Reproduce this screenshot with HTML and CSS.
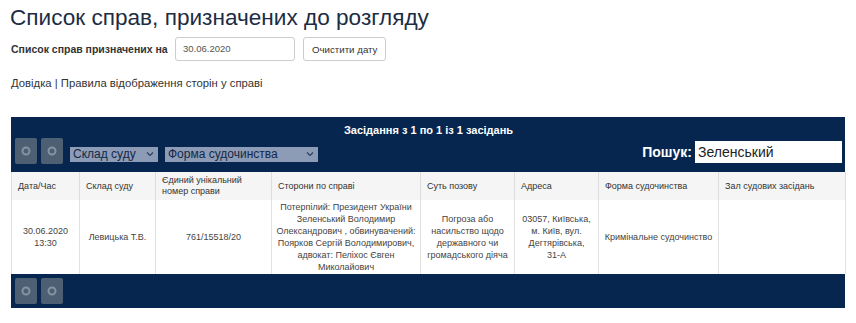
FILE: index.html
```html
<!DOCTYPE html>
<html lang="uk">
<head>
  <meta charset="UTF-8">
  <title>Список справ, призначених до розгляду</title>
  <link rel="stylesheet" href="styles.css">
</head>
<body>
  <h1 class="title">Список справ, призначених до розгляду</h1>

  <!-- Вибір дати -->
  <div class="date-row">
    <span class="date-label">Список справ призначених на</span>
    <div class="date-input">30.06.2020</div>
    <button class="btn-clear">Очистити дату</button>
  </div>

  <p class="links">Довідка | Правила відображення сторін у справі</p>

  <!-- Таблиця засідань -->
  <div class="panel">
    <div class="panel-head">
      <div class="panel-title">Засідання з 1 по 1 із 1 засідань</div>
      <div class="toolbar">
        <span class="tool-btn"><svg width="10" height="10" viewBox="0 0 10 10"><circle cx="5" cy="5" r="3.5" fill="none" stroke="#8393a3" stroke-width="2"/></svg></span>
        <span class="tool-btn"><svg width="10" height="10" viewBox="0 0 10 10"><circle cx="5" cy="5" r="3.5" fill="none" stroke="#8393a3" stroke-width="2"/></svg></span>
        <span class="fake-select sel-court">Склад суду <svg width="8" height="6" viewBox="0 0 8 6"><path d="M1 1.5 L4 4.5 L7 1.5" fill="none" stroke="#2b3f5e" stroke-width="1.2"/></svg></span>
        <span class="fake-select sel-form">Форма судочинства <svg width="8" height="6" viewBox="0 0 8 6"><path d="M1 1.5 L4 4.5 L7 1.5" fill="none" stroke="#2b3f5e" stroke-width="1.2"/></svg></span>
        <div class="search">
          <span class="search-label">Пошук:</span>
          <div class="search-input">Зеленський</div>
        </div>
      </div>
    </div>

    <table class="cases">
      <colgroup>
        <col style="width:68px">
        <col style="width:76px">
        <col style="width:116px">
        <col style="width:149px">
        <col style="width:94px">
        <col style="width:84px">
        <col style="width:120px">
        <col style="width:127px">
      </colgroup>
      <thead>
        <tr>
          <th>Дата/Час</th>
          <th>Склад суду</th>
          <th>Єдиний унікальний номер справи</th>
          <th>Сторони по справі</th>
          <th>Суть позову</th>
          <th>Адреса</th>
          <th>Форма судочинства</th>
          <th>Зал судових засідань</th>
        </tr>
      </thead>
      <tbody>
        <tr>
          <td>30.06.2020<br>13:30</td>
          <td>Левицька Т.В.</td>
          <td>761/15518/20</td>
          <td>Потерпілий: Президент України Зеленський Володимир Олександрович , обвинувачений: Поярков Сергій Володимирович, адвокат: Пеліхос Євген Миколайович</td>
          <td>Погроза або насильство щодо державного чи громадського діяча</td>
          <td>03057, Київська, м. Київ, вул. Дегтярівська, <span class="nowrap">31-А</span></td>
          <td>Кримінальне судочинство</td>
          <td></td>
        </tr>
      </tbody>
    </table>

    <div class="panel-foot">
      <span class="tool-btn"><svg width="10" height="10" viewBox="0 0 10 10"><circle cx="5" cy="5" r="3.5" fill="none" stroke="#8393a3" stroke-width="2"/></svg></span>
      <span class="tool-btn"><svg width="10" height="10" viewBox="0 0 10 10"><circle cx="5" cy="5" r="3.5" fill="none" stroke="#8393a3" stroke-width="2"/></svg></span>
    </div>
  </div>
</body>
</html>
```

FILE: styles.css
```css
body {
  margin: 0;
  padding: 0 11px;
  font-family: "Liberation Sans", Arial, sans-serif;
  color: #333;
  background: #fff;
}

.title {
  margin: 0;
  padding-top: 3px;
  margin-left: -1px;
  font-size: 22.6px;
  font-weight: normal;
  color: #1d2d44;
  line-height: 30px;
}

.date-row {
  display: flex;
  align-items: center;
  margin-top: 4px;
  height: 24px;
}

.date-label {
  flex: none;
  width: 164px;
  white-space: nowrap;
  font-size: 10.5px;
  font-weight: bold;
  color: #333;
}

.date-input {
  width: 101px;
  height: 22px;
  line-height: 22px;
  padding: 0 10px 0 7px;
  border: 1px solid #ccc;
  border-radius: 3px;
  font-size: 9.5px;
  color: #555;
}

.btn-clear {
  margin-left: 8px;
  height: 24px;
  padding: 0 8px;
  border: 1px solid #ccc;
  border-radius: 3px;
  background: #fff;
  font-family: "Liberation Sans", Arial, sans-serif;
  font-size: 9.7px;
  color: #333;
}

.links {
  margin: 14px 0 0;
  font-size: 11.3px;
  line-height: 16px;
  color: #333;
}

.panel {
  margin-top: 26px;
  width: 834px;
}

.panel-head {
  background: #07264f;
  padding: 7px 3px 8px 4px;
}

.panel-title {
  text-align: center;
  color: #fff;
  font-weight: bold;
  font-size: 11px;
  line-height: 13px;
}

.toolbar {
  display: flex;
  align-items: center;
  height: 27px;
}

.tool-btn {
  display: inline-flex;
  align-items: center;
  justify-content: center;
  width: 22px;
  height: 26px;
  margin-right: 4px;
  background: #4d6073;
  border-radius: 2px;
}

.fake-select {
  display: inline-flex;
  align-items: center;
  justify-content: space-between;
  height: 15px;
  padding: 0 4px 0 3px;
  background: #8d9cb6;
  color: #132848;
  font-size: 12px;
  margin-top: 7px;
  box-sizing: border-box;
}

.sel-court {
  width: 88px;
  margin-left: 3px;
}

.sel-form {
  width: 153px;
  margin-left: 7px;
}

.search {
  margin-left: auto;
  display: flex;
  align-items: center;
  margin-top: 3px;
}

.search-label {
  color: #fff;
  font-weight: bold;
  font-size: 14px;
  margin-right: 3px;
}

.search-input {
  width: 144px;
  height: 22px;
  line-height: 22px;
  padding-left: 3px;
  background: #fff;
  color: #222;
  font-size: 14px;
}

.cases {
  width: 834px;
  table-layout: fixed;
  border-collapse: collapse;
  font-size: 9px;
}

.cases th {
  background: #f5f5f5;
  font-weight: normal;
  text-align: left;
  color: #333;
  height: 28px;
  padding: 0 6px;
  line-height: 11px;
  border-left: 1px solid #ddd;
  border-right: 1px solid #ddd;
}

.cases td {
  height: 74px;
  padding: 0 4px;
  text-align: center;
  vertical-align: middle;
  color: #444;
  line-height: 12px;
  border-left: 1px solid #e2e2e2;
  border-right: 1px solid #e2e2e2;
}

.nowrap {
  white-space: nowrap;
}

.panel-foot {
  display: flex;
  align-items: center;
  height: 34px;
  padding-left: 4px;
  background: #07264f;
}
```
